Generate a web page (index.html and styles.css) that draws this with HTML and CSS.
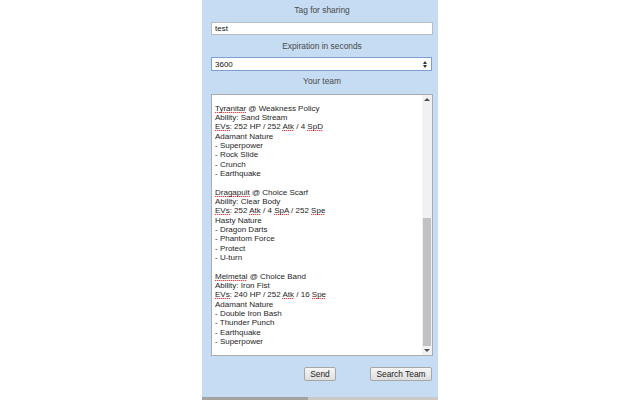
FILE: index.html
```html
<!DOCTYPE html>
<html>
<head>
<meta charset="utf-8">
<link rel="stylesheet" href="styles.css">
</head>
<body>
<div class="panel">
  <div class="label label-first">Tag for sharing</div>
  <div class="field field-tag">test</div>
  <div class="label">Expiration in seconds</div>
  <div class="field field-num">
    <span class="num-value">3600</span>
    <span class="spin"><i class="tri-up"></i><i class="tri-down"></i></span>
  </div>
  <div class="label label-team">Your team</div>
  <div class="team">
    <div class="team-text">
      <div class="line"><span class="sp">Tyranitar</span> @ Weakness Policy</div>
      <div class="line">Ability: Sand Stream</div>
      <div class="line"><span class="sp">EVs</span>: 252 HP / 252 <span class="sp">Atk</span> / 4 <span class="sp">SpD</span></div>
      <div class="line">Adamant Nature</div>
      <div class="line">- Superpower</div>
      <div class="line">- Rock Slide</div>
      <div class="line">- Crunch</div>
      <div class="line">- Earthquake</div>
      <div class="line">&nbsp;</div>
      <div class="line"><span class="sp">Dragapult</span> @ Choice Scarf</div>
      <div class="line">Ability: Clear Body</div>
      <div class="line"><span class="sp">EVs</span>: 252 <span class="sp">Atk</span> / 4 <span class="sp">SpA</span> / 252 <span class="sp">Spe</span></div>
      <div class="line">Hasty Nature</div>
      <div class="line">- Dragon Darts</div>
      <div class="line">- Phantom Force</div>
      <div class="line">- Protect</div>
      <div class="line">- U-turn</div>
      <div class="line">&nbsp;</div>
      <div class="line"><span class="sp">Melmetal</span> @ Choice Band</div>
      <div class="line">Ability: Iron Fist</div>
      <div class="line"><span class="sp">EVs</span>: 240 HP / 252 <span class="sp">Atk</span> / 16 <span class="sp">Spe</span></div>
      <div class="line">Adamant Nature</div>
      <div class="line">- Double Iron Bash</div>
      <div class="line">- Thunder Punch</div>
      <div class="line">- Earthquake</div>
      <div class="line">- Superpower</div>
    </div>
    <div class="sb">
      <div class="sb-btn"><i class="arrow-up"></i></div>
      <div class="sb-track"><div class="sb-thumb"></div></div>
      <div class="sb-btn"><i class="arrow-down"></i></div>
    </div>
  </div>
  <div class="buttons">
    <button class="btn btn-send">Send</button>
    <button class="btn btn-search">Search Team</button>
  </div>
  <div class="hscroll"><div class="hscroll-thumb"></div></div>
</div>
</body>
</html>
```
FILE: styles.css
```css
html, body {
  margin: 0;
  padding: 0;
  background: #ffffff;
}
body {
  font-family: "Liberation Sans", Arial, sans-serif;
  font-size: 8px;
  color: #222;
}
.panel {
  width: 236px;
  height: 400px;
  margin-left: 202px;
  background: #c5dcf2;
  box-sizing: border-box;
  padding: 5px 5px 0 9px;
  display: flex;
  flex-direction: column;
  overflow: hidden;
}
.label {
  height: 10px;
  line-height: 10px;
  font-size: 8.4px;
  text-align: center;
  color: #4a4a4a;
}
.field {
  box-sizing: border-box;
  background: #fff;
  border: 1px solid #b9bcc2;
  padding: 0 3px;
  display: flex;
  align-items: center;
  color: #111;
}
.field-tag {
  height: 13px;
  margin: 7px 0 6px;
}
.field-num {
  height: 14px;
  margin: 6px 1px 5px 0;
  border-color: #7d9fd4;
  justify-content: space-between;
  padding-right: 4px;
}
.spin {
  display: flex;
  flex-direction: column;
  gap: 1px;
}
.tri-up, .tri-down {
  display: block;
  width: 0;
  height: 0;
  border-left: 2.5px solid transparent;
  border-right: 2.5px solid transparent;
}
.tri-up { border-bottom: 3px solid #333; }
.tri-down { border-top: 3px solid #333; }
.team {
  box-sizing: border-box;
  height: 262px;
  margin-top: 8px;
  background: #fff;
  border: 1px solid #a9abb0;
  display: flex;
}
.team-text {
  flex: 1;
  overflow: hidden;
  padding: 8.5px 0 0 3px;
  color: #1e1e1e;
}
.line {
  height: 9.35px;
  line-height: 9.35px;
  white-space: nowrap;
}
.sp {
  background-image: repeating-linear-gradient(90deg, #e5484a 0 1px, rgba(229, 72, 74, 0.35) 1px 2px);
  background-repeat: no-repeat;
  background-size: 100% 1px;
  background-position: 0 100%;
}
.sb {
  width: 10px;
  display: flex;
  flex-direction: column;
  background: #f1f1f1;
}
.sb-btn {
  height: 10px;
  display: flex;
  align-items: center;
  justify-content: center;
}
.arrow-up, .arrow-down {
  display: block;
  width: 0;
  height: 0;
  border-left: 3px solid transparent;
  border-right: 3px solid transparent;
}
.arrow-up { border-bottom: 3px solid #505050; }
.arrow-down { border-top: 3px solid #505050; }
.sb-track {
  flex: 1;
  padding: 113px 1px 0;
}
.sb-thumb {
  height: 128px;
  background: #c1c1c1;
}
.buttons {
  display: flex;
  justify-content: flex-end;
  gap: 34px;
  margin-top: 11px;
  padding-right: 1px;
}
.btn {
  box-sizing: border-box;
  height: 14px;
  padding: 0;
  font-family: "Liberation Sans", Arial, sans-serif;
  font-size: 8.4px;
  color: #222;
  background: linear-gradient(#f6f6f6, #dedede);
  border: 1px solid #a6a6a6;
  border-radius: 2px;
}
.btn-send { width: 32px; }
.btn-search { width: 62px; }
.hscroll {
  margin: 16px 0 0 -9px;
  margin-right: -5px;
  height: 3px;
  background: #c9c9c9;
}
.hscroll-thumb {
  width: 106px;
  height: 3px;
  background: #a3a3a3;
}
```
